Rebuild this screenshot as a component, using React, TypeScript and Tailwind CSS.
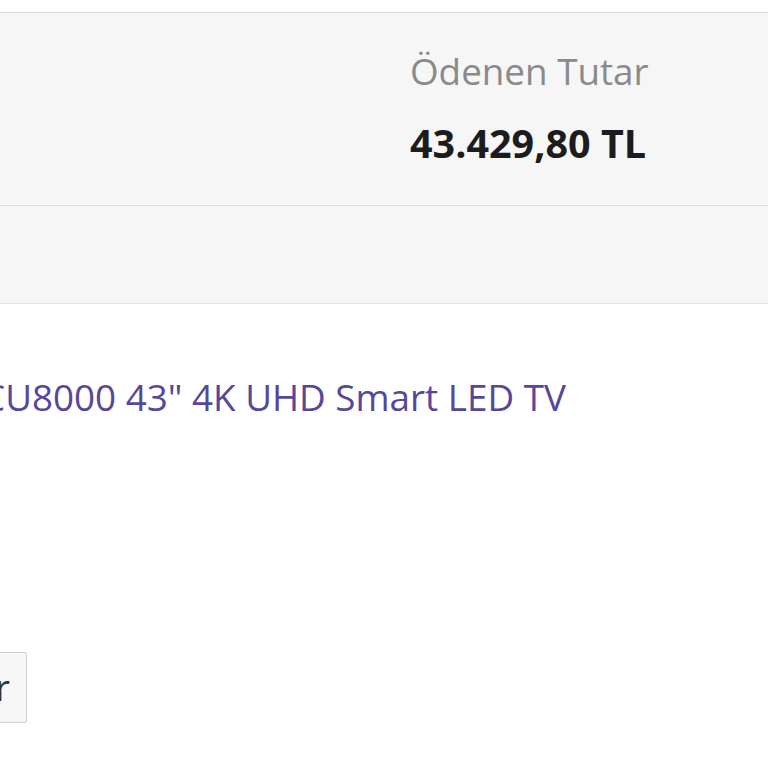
export default function App() {
  return (
    <div
      className="w-[768px] h-[768px] overflow-hidden bg-white"
      style={{ fontFamily: '"Open Sans", "Noto Sans", sans-serif' }}
    >
      <div className="h-[12px]" />
      <div className="border-t border-[#dcdcdc] bg-[#f6f6f6] pl-[410px] pt-[33px] h-[193px]">
        <div className="text-[36.8px] leading-[50px] text-[#8a8a8a]">Ödenen Tutar</div>
        <div className="mt-[22px] text-[39.5px] leading-[50px] font-bold text-[#1c1c1c]">
          43.429,80 TL
        </div>
      </div>
      <div className="border-t border-[#dcdcdc] bg-[#f6f6f6] h-[98px]" />
      <div className="border-t border-[#e3e3e3]">
        <div className="-ml-[18px] pt-[68px] text-[36.8px] leading-[50px] text-[#56479a] whitespace-nowrap">
          CU8000 43" 4K UHD Smart LED TV
        </div>
        <div className="h-[230px]" />
        <div className="-ml-[100px] flex">
          <button className="h-[71px] w-[127px] border border-[#cfcfcf] rounded-[2px] bg-[#f7f7f7] text-[36px] text-[#333] flex items-center justify-end pr-[16px] leading-none">
            Ver
          </button>
        </div>
      </div>
    </div>
  );
}
